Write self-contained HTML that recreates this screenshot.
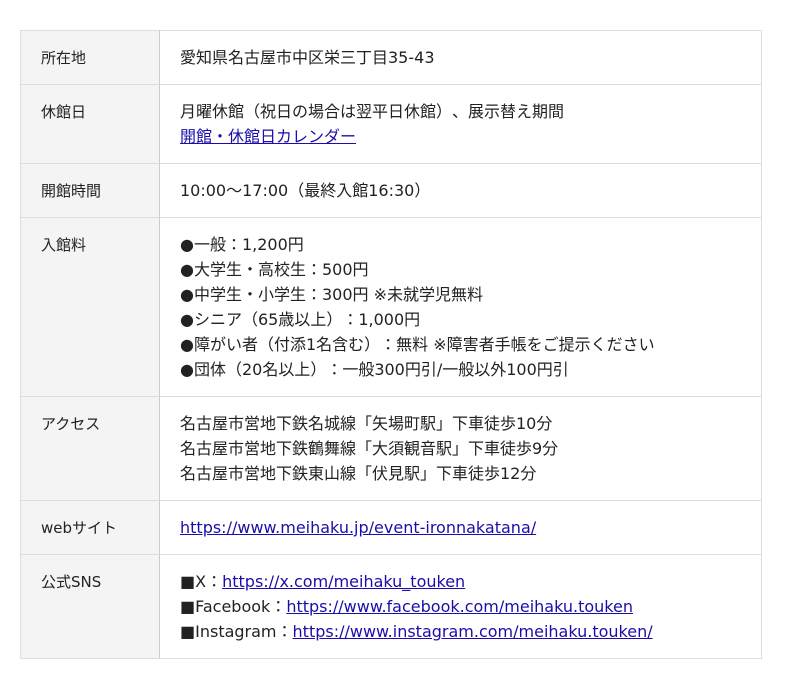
<!DOCTYPE html>
<html><head><meta charset="utf-8"><style>
body{margin:0;background:#fff;font-family:"DejaVu Sans","Noto Sans CJK JP",sans-serif;font-size:16px;color:#222;text-spacing-trim:space-all;}
table{position:absolute;left:20px;top:30px;width:742px;border-collapse:collapse;}
td{border:1px solid #ddd;vertical-align:top;line-height:25px;padding:14px 20px 13px 20px;}
td.l{width:98px;background:#f4f4f4;border-right:1px solid #ccc;font-size:15px;padding-top:15px;}
a{color:#1a0dab;text-decoration:underline;}
</style></head><body>
<table>
<tr style="height:54px"><td class="l">所在地</td><td>愛知県名古屋市中区栄三丁目35-43</td></tr>
<tr style="height:79px"><td class="l">休館日</td><td>月曜休館（祝日の場合は翌平日休館）、展示替え期間<br><a>開館・休館日カレンダー</a></td></tr>
<tr style="height:54px"><td class="l">開館時間</td><td>10:00〜17:00（最終入館16:30）</td></tr>
<tr style="height:179px"><td class="l">入館料</td><td>●一般：1,200円<br>●大学生・高校生：500円<br>●中学生・小学生：300円 ※未就学児無料<br>●シニア（65歳以上）：1,000円<br>●障がい者（付添1名含む）：無料 ※障害者手帳をご提示ください<br>●団体（20名以上）：一般300円引/一般以外100円引</td></tr>
<tr style="height:104px"><td class="l">アクセス</td><td>名古屋市営地下鉄名城線「矢場町駅」下車徒歩10分<br>名古屋市営地下鉄鶴舞線「大須観音駅」下車徒歩9分<br>名古屋市営地下鉄東山線「伏見駅」下車徒歩12分</td></tr>
<tr style="height:54px"><td class="l">webサイト</td><td><a>https://www.meihaku.jp/event-ironnakatana/</a></td></tr>
<tr style="height:104px"><td class="l">公式SNS</td><td>■X：<a>https://x.com/meihaku_touken</a><br>■Facebook：<a>https://www.facebook.com/meihaku.touken</a><br>■Instagram：<a>https://www.instagram.com/meihaku.touken/</a></td></tr>
</table>
</body></html>
